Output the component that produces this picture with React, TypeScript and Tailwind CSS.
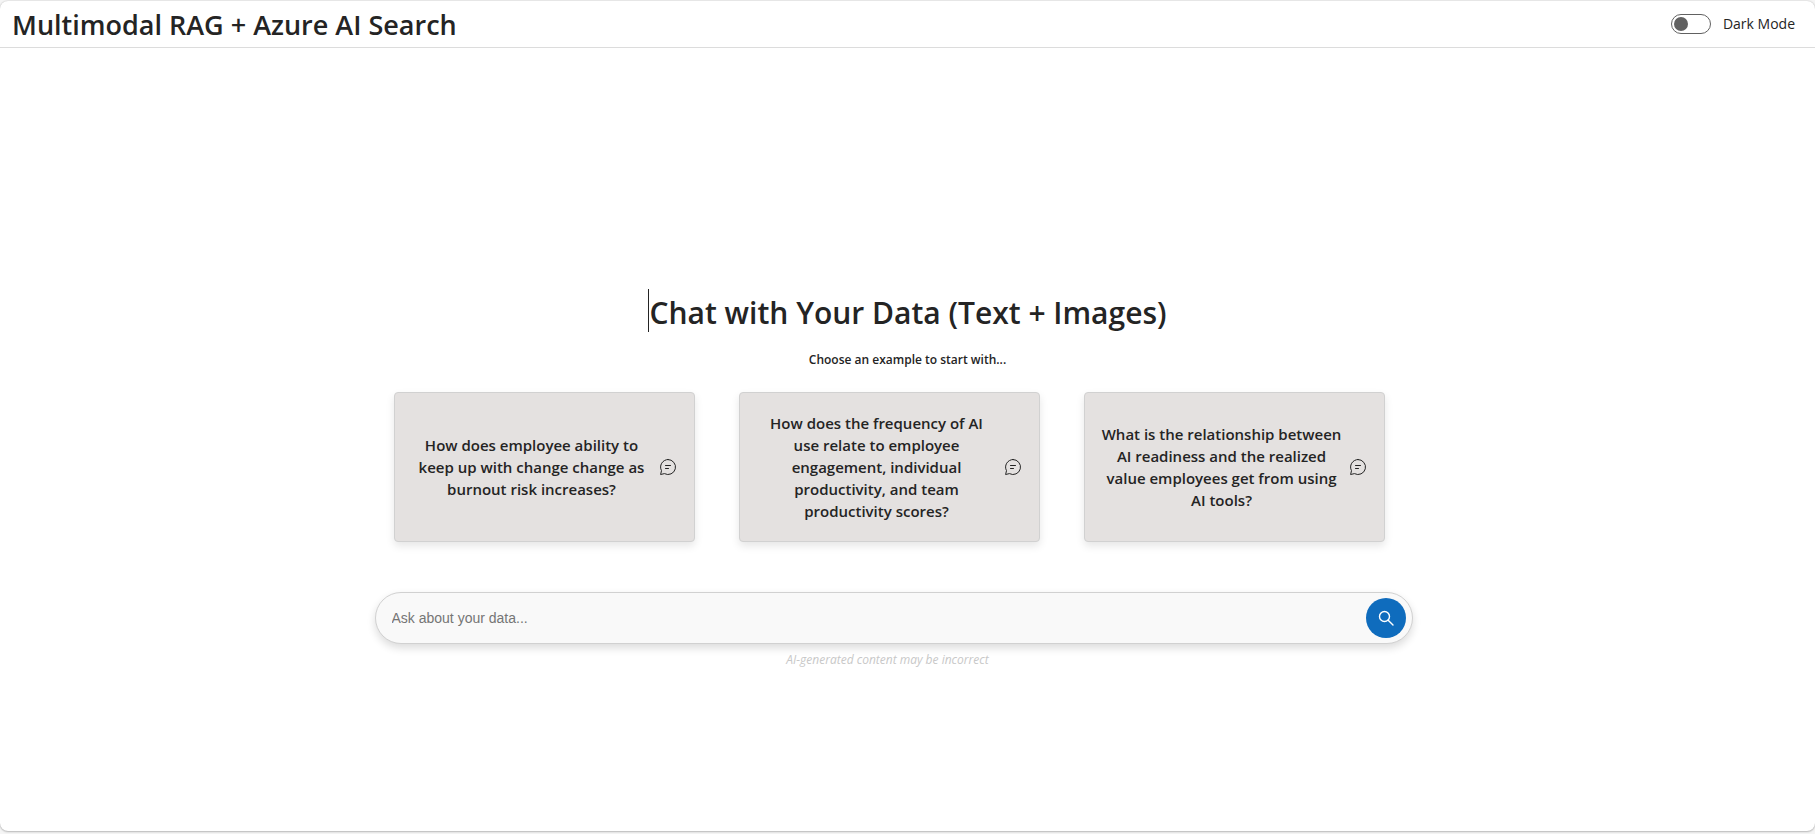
import { useState } from "react";

const EXAMPLES = [
  "How does employee ability to keep up with change change as burnout risk increases?",
  "How does the frequency of AI use relate to employee engagement, individual productivity, and team productivity scores?",
  "What is the relationship between AI readiness and the realized value employees get from using AI tools?",
];

function ChatIcon() {
  return (
    <svg aria-hidden="true" viewBox="0 0 20 20" className="size-5 shrink-0" fill="none" stroke="currentColor" strokeLinecap="round" strokeLinejoin="round">
      <path d="M10 2.5a7.5 7.5 0 1 1-3.55 14.1L2.6 17.5l.9-3.85A7.5 7.5 0 0 1 10 2.5Z" />
      <path d="M7.5 8.5h5M7.5 11.5h3" />
    </svg>
  );
}

function SearchIcon() {
  return (
    <svg aria-hidden="true" viewBox="0 0 20 20" className="size-5" fill="none" stroke="currentColor" strokeWidth="1.4" strokeLinecap="round">
      <circle cx="8.5" cy="8.5" r="5" />
      <path d="m12.2 12.2 4.8 4.8" />
    </svg>
  );
}

export default function App() {
  const [dark, setDark] = useState(false);
  const [query, setQuery] = useState("");

  return (
    <div className="flex min-h-screen flex-col bg-[#f5f5f5] pt-px pb-[3px] font-['Open_Sans',sans-serif] text-[#242424]">
      <div className="flex grow flex-col rounded-lg bg-white shadow-[0_0_2px_rgba(0,0,0,0.2),0_1px_2px_rgba(0,0,0,0.2)]">
        <header className="flex h-[47px] items-center justify-between border-b border-[#dcdcdc] pr-5 pl-3">
          <h1 className="pt-px text-[27px] leading-9 font-semibold">Multimodal RAG + Azure AI Search</h1>
          <label className="flex items-center gap-3 text-sm">
            <input
              type="checkbox"
              role="switch"
              checked={dark}
              onChange={(e) => setDark(e.target.checked)}
              className="flex h-5 w-10 appearance-none items-center rounded-full border border-[#616161] px-0.5 before:size-3.5 before:rounded-full before:bg-[#616161] checked:justify-end"
            />
            Dark Mode
          </label>
        </header>

        <main className="flex grow flex-col items-center pt-[241px]">
          <h2 className="border-l border-[#242424] pt-1 text-[30px] leading-[39px] font-semibold">
            Chat with Your Data (Text + Images)
          </h2>
          <p className="mt-5 text-xs leading-4 font-semibold">Choose an example to start with...</p>

          <div className="mt-6 flex gap-11 pr-9">
            {EXAMPLES.map((text) => (
              <button
                key={text}
                type="button"
                className="flex h-[150px] w-[301px] items-center justify-between gap-1.5 rounded border border-[#d1d1d1] bg-[#e4e1e0] px-4 text-[15px] leading-[22px] font-semibold shadow-[0_4px_8px_rgba(0,0,0,0.1)]"
              >
                <span className="grow">{text}</span>
                <ChatIcon />
              </button>
            ))}
          </div>

          <form
            onSubmit={(e) => e.preventDefault()}
            className="mt-[50px] mr-7 flex h-[52px] w-full max-w-[1038px] items-center rounded-full border border-[#d1d1d1] bg-[#f9f9f9] pr-1.5 pl-4 shadow-[0_4px_8px_rgba(0,0,0,0.14)]"
          >
            <input
              type="text"
              aria-label="Ask about your data"
              placeholder="Ask about your data..."
              value={query}
              onChange={(e) => setQuery(e.target.value)}
              className="min-w-0 grow bg-transparent font-['Liberation_Sans',sans-serif] text-sm outline-none placeholder:text-[#757575]"
            />
            <button type="submit" aria-label="Search" className="flex size-10 items-center justify-center rounded-full bg-[#0f6cbd] text-white">
              <SearchIcon />
            </button>
          </form>
          <p className="mt-2 pr-10 text-xs leading-4 text-[#c8c8c8] italic">AI-generated content may be incorrect</p>
        </main>
      </div>
    </div>
  );
}
